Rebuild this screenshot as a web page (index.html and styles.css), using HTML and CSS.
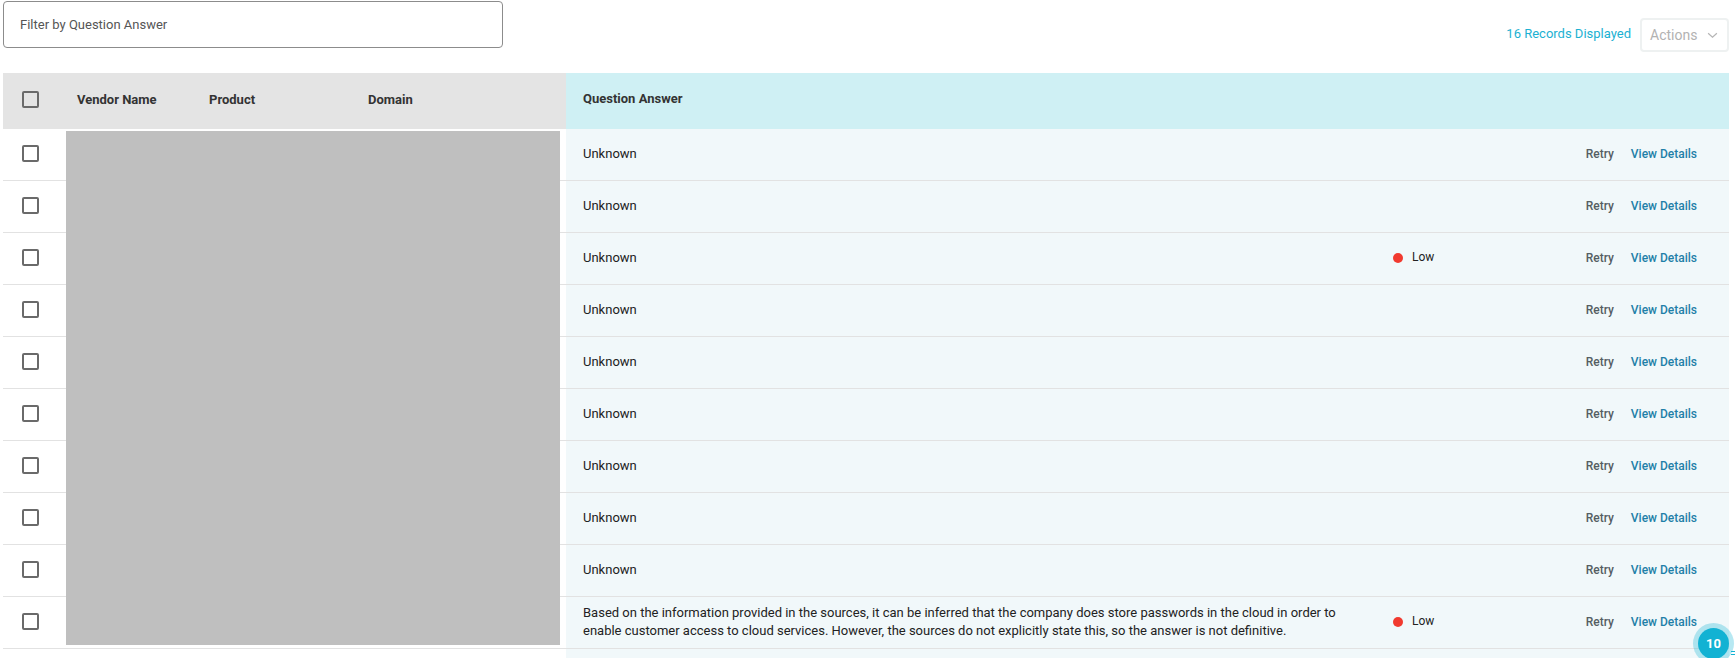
FILE: index.html
```html
<!DOCTYPE html>
<html>
<head>
<meta charset="utf-8">
<link rel="stylesheet" href="styles.css">
</head>
<body>
<div class="page">
  <div class="toolbar">
    <div class="filter">Filter by Question Answer</div>
    <div class="tools">
      <span class="records">16 Records Displayed</span>
      <div class="actions">Actions
        <svg class="chev" viewBox="0 0 12 8" width="11" height="7"><path d="M1 1.5 L6 6 L11 1.5" fill="none" stroke="#b5b5b5" stroke-width="1.4"/></svg>
      </div>
    </div>
  </div>

  <div class="table">
    <div class="row head">
      <div class="left">
        <div class="c-check"><span class="box"></span></div>
        <div class="c-vendor">Vendor Name</div>
        <div class="c-product">Product</div>
        <div class="c-domain">Domain</div>
      </div>
      <div class="right">
        <div class="c-q">Question Answer</div>
      </div>
    </div>

    <div class="body">
      <div class="row">
        <div class="left"><div class="c-check"><span class="box"></span></div></div>
        <div class="right"><div class="c-q">Unknown</div><div class="c-risk"></div><div class="c-act"><span class="retry">Retry</span><span class="view">View Details</span></div></div>
      </div>
      <div class="row">
        <div class="left"><div class="c-check"><span class="box"></span></div></div>
        <div class="right"><div class="c-q">Unknown</div><div class="c-risk"></div><div class="c-act"><span class="retry">Retry</span><span class="view">View Details</span></div></div>
      </div>
      <div class="row">
        <div class="left"><div class="c-check"><span class="box"></span></div></div>
        <div class="right"><div class="c-q">Unknown</div><div class="c-risk"><span class="dot"></span>Low</div><div class="c-act"><span class="retry">Retry</span><span class="view">View Details</span></div></div>
      </div>
      <div class="row">
        <div class="left"><div class="c-check"><span class="box"></span></div></div>
        <div class="right"><div class="c-q">Unknown</div><div class="c-risk"></div><div class="c-act"><span class="retry">Retry</span><span class="view">View Details</span></div></div>
      </div>
      <div class="row">
        <div class="left"><div class="c-check"><span class="box"></span></div></div>
        <div class="right"><div class="c-q">Unknown</div><div class="c-risk"></div><div class="c-act"><span class="retry">Retry</span><span class="view">View Details</span></div></div>
      </div>
      <div class="row">
        <div class="left"><div class="c-check"><span class="box"></span></div></div>
        <div class="right"><div class="c-q">Unknown</div><div class="c-risk"></div><div class="c-act"><span class="retry">Retry</span><span class="view">View Details</span></div></div>
      </div>
      <div class="row">
        <div class="left"><div class="c-check"><span class="box"></span></div></div>
        <div class="right"><div class="c-q">Unknown</div><div class="c-risk"></div><div class="c-act"><span class="retry">Retry</span><span class="view">View Details</span></div></div>
      </div>
      <div class="row">
        <div class="left"><div class="c-check"><span class="box"></span></div></div>
        <div class="right"><div class="c-q">Unknown</div><div class="c-risk"></div><div class="c-act"><span class="retry">Retry</span><span class="view">View Details</span></div></div>
      </div>
      <div class="row">
        <div class="left"><div class="c-check"><span class="box"></span></div></div>
        <div class="right"><div class="c-q">Unknown</div><div class="c-risk"></div><div class="c-act"><span class="retry">Retry</span><span class="view">View Details</span></div></div>
      </div>
      <div class="row">
        <div class="left"><div class="c-check"><span class="box"></span></div></div>
        <div class="right"><div class="c-q">Based on the information provided in the sources, it can be inferred that the company does store passwords in the cloud in order to enable customer access to cloud services. However, the sources do not explicitly state this, so the answer is not definitive.</div><div class="c-risk"><span class="dot"></span>Low</div><div class="c-act"><span class="retry">Retry</span><span class="view">View Details</span></div></div>
      </div>
      <div class="row filler">
        <div class="left"></div>
        <div class="right"></div>
      </div>
      <div class="redact"></div>
      <div class="bubble">10</div>
      <div class="grip"></div>
    </div>
  </div>
</div>
</body>
</html>
```

FILE: styles.css
```css
* { box-sizing: border-box; }
html, body { margin: 0; padding: 0; background: #fff; }
body {
  font-family: Roboto, "Noto Sans", "Liberation Sans", sans-serif;
  color: #222;
  font-size: 13px;
}
.page {
  padding: 1px 6px 0 3px;
  width: 1735px;
  height: 658px;
  overflow: hidden;
}
.toolbar {
  display: flex;
  justify-content: space-between;
  align-items: flex-start;
  height: 72px;
}
.filter {
  width: 500px;
  height: 47px;
  border: 1px solid #8c8c8c;
  border-radius: 4px;
  padding: 0 0 0 16px;
  display: flex;
  align-items: center;
  color: #555;
  font-size: 13px;
}
.tools {
  display: flex;
  align-items: center;
  margin-top: 17px;
  gap: 9px;
}
.records {
  color: #1cb1d2;
  font-size: 13px;
  margin-bottom: 3px;
}
.actions {
  width: 89px;
  height: 34px;
  border: 2px solid #eef1f1;
  border-radius: 4px;
  color: #b2b2b2;
  font-size: 14px;
  display: flex;
  align-items: center;
  padding-left: 8px;
  gap: 10px;
}
.table {
  width: 1726px;
}
.row {
  display: flex;
  height: 52px;
}
.row .left {
  width: 563px;
  display: flex;
  align-items: center;
  border-bottom: 1px solid #e2e2e2;
  background: #fff;
  padding-bottom: 2px;
}
.row .right {
  flex: 1;
  display: flex;
  align-items: center;
  background: #f1f8fa;
  border-bottom: 1px solid #e2e2e2;
  padding-bottom: 1px;
}
.row.head { height: 56px; }
.row.head .left { background: #e4e4e4; border-bottom: none; padding-bottom: 4px; }
.row.head .right { background: #cff0f4; border-bottom: none; padding-bottom: 4px; }
.row.head { font-weight: 700; color: #333; font-size: 13px; }
.c-check { width: 63px; padding-left: 19px; display: flex; align-items: center; }
.box {
  width: 17px;
  height: 17px;
  border: 2px solid #6a6a6a;
  border-radius: 2px;
  display: block;
}
.c-vendor { width: 143px; padding-left: 11px; }
.c-product { width: 159px; }
.c-domain { flex: 1; }
.c-q {
  width: 827px;
  padding-left: 17px;
  padding-right: 52px;
  line-height: 18px;
  font-size: 13px;
}
.row .c-q { color: #222; }
.row.head .c-q { color: #333; }
.c-risk {
  width: 160px;
  display: flex;
  align-items: center;
  font-size: 12px;
  color: #222;
  padding-bottom: 3px;
}
.dot {
  width: 10px;
  height: 10px;
  border-radius: 50%;
  background: #f13a2f;
  margin-right: 9px;
  margin-top: 2px;
}
.c-act {
  flex: 1;
  display: flex;
  justify-content: flex-end;
  align-items: center;
  padding-right: 32px;
  gap: 17px;
  font-size: 12px;
  font-weight: 500;
}
.retry { color: #555e63; }
.view { color: #1f80a8; }
.body { position: relative; }
.row.filler { height: 20px; }
.row.filler .left, .row.filler .right { border-bottom: none; }
.redact {
  position: absolute;
  left: 63px;
  top: 2px;
  width: 494px;
  height: 514px;
  background: #bfbfbf;
}
.bubble {
  position: absolute;
  left: 1695px;
  top: 499px;
  width: 31px;
  height: 31px;
  border-radius: 50%;
  background: #12b2d3;
  color: #fff;
  font-weight: 700;
  font-size: 13px;
  display: flex;
  align-items: center;
  justify-content: center;
  box-shadow: 0 0 0 5px rgba(18, 178, 211, 0.3);
}
.grip {
  position: absolute;
  left: 1728px;
  top: 522px;
  width: 6px;
  height: 4px;
  border-top: 1px solid #12b2d3;
  border-bottom: 1px solid #12b2d3;
}
```
